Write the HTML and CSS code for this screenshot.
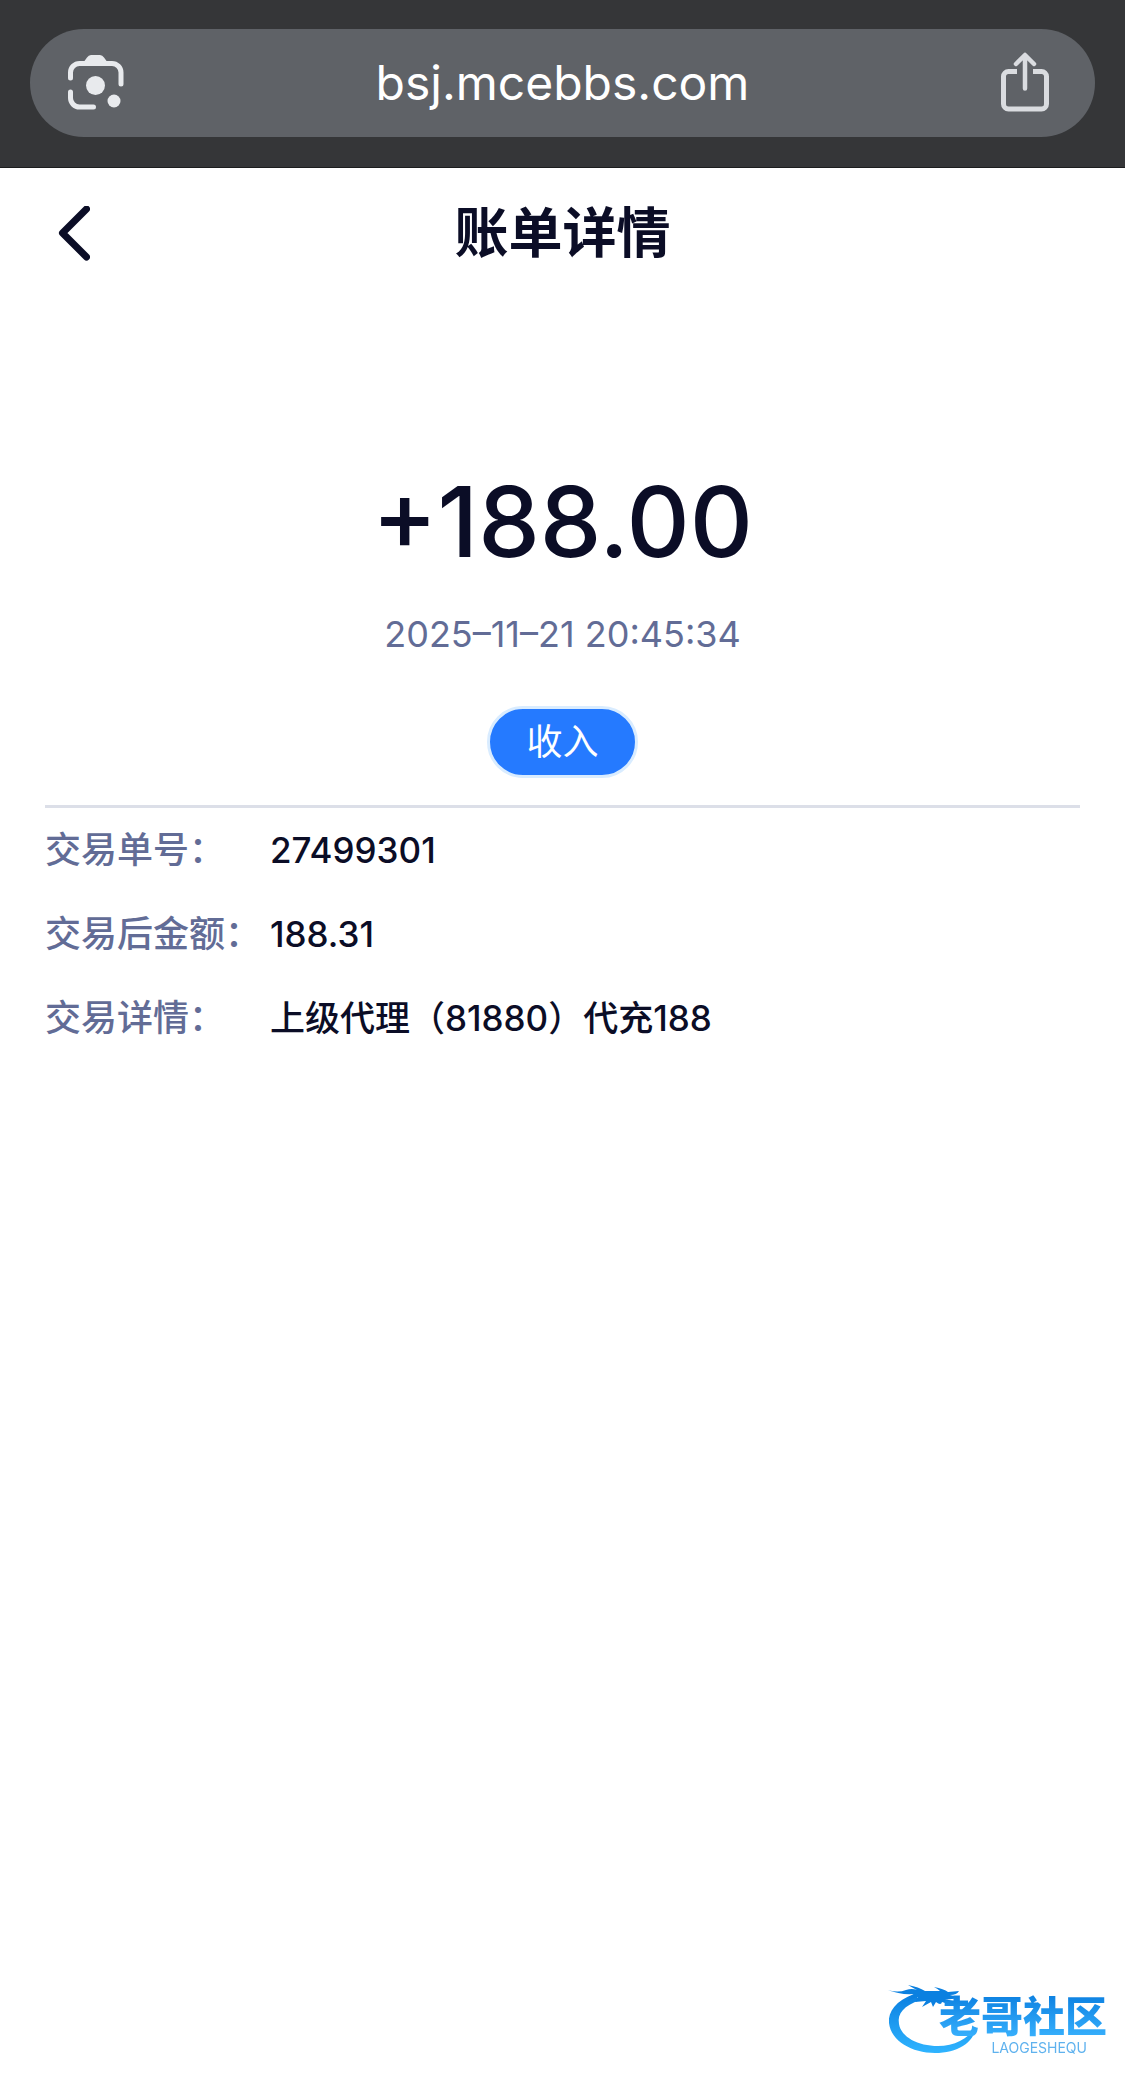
FILE: index.html
```
<!DOCTYPE html>
<html lang="zh-CN">
<head>
  <meta charset="UTF-8" />
  <meta name="viewport" content="width=device-width, initial-scale=1.0"/>
  <title>账单详情</title>
  <link rel="stylesheet" href="styles.css">
</head>
<body>
  <!-- BROWSER BAR -->
  <div class="browser-bar">
    <div class="address-pill">
      <button class="icon-btn" type="button" aria-label="Lens">
        <svg class="lens-icon" viewBox="0 0 56 56" fill="none" stroke="#e8eaed" stroke-width="5" stroke-linecap="round">
          <path d="M2.500 24V18.500a9 9 0 0 1 9-9h32.500a9 9 0 0 1 9 9V30"/>
          <path d="M2.500 38v6a9 9 0 0 0 9 9H25.500"/>
          <path d="M15 9l4-5.500q1.500-2.500 4-2.500h9q2.500 0 4 2.500L40 9z" fill="#e8eaed" stroke="none"/>
          <circle cx="27.500" cy="31.500" r="9.500" fill="#e8eaed" stroke="none"/>
          <circle cx="46" cy="47" r="6.500" fill="#e8eaed" stroke="none"/>
        </svg>
      </button>
      <input class="address" type="text" value="bsj.mcebbs.com" aria-label="Address" readonly />
      <button class="icon-btn" type="button" aria-label="Share">
        <svg class="share-icon" viewBox="0 0 48 60" fill="none" stroke="#dadce0" stroke-width="5">
          <path d="M16 19.500H7.500a5 5 0 0 0-5 5v27.500a5 5 0 0 0 5 5h33a5 5 0 0 0 5-5V24.500a5 5 0 0 0-5-5H32"/>
          <path d="M24 36.500V3.500M15 12l9-9 9 9" stroke-width="4.500" stroke-linecap="round" stroke-linejoin="round"/>
        </svg>
      </button>
    </div>
  </div>

  <!-- PAGE HEADER -->
  <header class="page-header">
    <button class="back-btn" type="button" aria-label="返回">
      <svg class="back-icon" viewBox="0 0 32 56" fill="none" stroke="#0b0d26" stroke-width="7" stroke-linecap="round" stroke-linejoin="round">
        <path d="M28.500 3L4.500 27l24 24"/>
      </svg>
    </button>
    <h1>账单详情</h1>
  </header>

  <main>
    <!-- Amount summary -->
    <section class="summary">
      <p class="amount">+188.00</p>
      <p class="time">2025–11–21 20:45:34</p>
      <span class="tag">收入</span>
    </section>

    <!-- Bill details -->
    <dl class="details">
      <div class="row">
        <dt>交易单号：</dt>
        <dd>27499301</dd>
      </div>
      <div class="row">
        <dt>交易后金额：</dt>
        <dd>188.31</dd>
      </div>
      <div class="row">
        <dt>交易详情：</dt>
        <dd>上级代理（81880）代充188</dd>
      </div>
    </dl>
  </main>

  <!-- WATERMARK -->
  <div class="watermark">
    <svg class="dragon" viewBox="0 0 90 70">
      <defs>
        <linearGradient id="dragonFill" x1="0" y1="0" x2="0" y2="1">
          <stop offset="0" stop-color="#0b7fe0"/>
          <stop offset="1" stop-color="#2fb4ff"/>
        </linearGradient>
      </defs>
      <!-- body ring -->
      <path fill="url(#dragonFill)" d="M26 9C8 16 0 26 1 38C3 56 24 68 47 68C69 68 86 58 88 42C80 54 66 61 50 61C30 61 13 52 11 39C9 28 16 21 32 15Z"/>
      <!-- head, horns and whiskers -->
      <path fill="#0b80e0" d="M0 5Q10 8 18 5Q24 3 29 5Q25 3 20 0Q31 2 37 6L52 6Q50 4 46 2Q56 4 60 7L71 6Q69 10 62 10L70 12Q66 15 57 14L69 17Q62 20 54 17Q53 21 48 17L45 22L43 17L34 22L38 16L27 17L30 12Q24 13 20 16Q21 12 26 9Q12 10 0 5Z"/>
    </svg>
    <div class="watermark-text">
      <strong>老哥社区</strong>
      <small>LAOGESHEQU</small>
    </div>
  </div>
</body>
</html>
```
FILE: styles.css
```
/* ------------------------------------------------------------
   COLOR PALETTE
------------------------------------------------------------ */
:root {
  --bar: #353638;
  --pill: #5f6267;
  --ink: #0b0d26;   /* titles and values */
  --muted: #626c96; /* labels and time */
  --blue: #257aff;
  --line: #dcdfe8;
}

/* ------------------------------------------------------------
   GLOBAL & RESET
------------------------------------------------------------ */
* {
  margin: 0;
  padding: 0;
  box-sizing: border-box;
}
body {
  font-family: Inter, "Noto Sans CJK SC", sans-serif;
  font-size: 36px;
  line-height: 48px;
  background-color: #fff;
  color: var(--ink);
}
button {
  background: none;
  border: none;
  cursor: pointer;
}
svg {
  display: block;
}

/* ------------------------------------------------------------
   BROWSER BAR
------------------------------------------------------------ */
.browser-bar {
  background-color: var(--bar);
  border-bottom: 1px solid #1c1d1e;
  padding: 29px 30px 30px;
}
.address-pill {
  display: flex;
  align-items: center;
  background-color: var(--pill);
  border-radius: 54px;
  height: 108px;
  padding: 0 38px 2px;
}
.icon-btn {
  flex: none;
}
.lens-icon {
  width: 56px;
  height: 56px;
}
.share-icon {
  width: 48px;
  height: 60px;
  margin-right: 8px;
}
.address {
  flex: 1;
  min-width: 0;
  background: none;
  border: none;
  outline: none;
  color: #fff;
  font-family: inherit;
  font-size: 48px;
  text-align: center;
}

/* ------------------------------------------------------------
   PAGE HEADER
------------------------------------------------------------ */
.page-header {
  display: grid;
  grid-template-columns: 1fr auto 1fr;
  align-items: center;
  height: 132px;
  padding: 0 58px;
}
.back-btn {
  justify-self: start;
}
.back-icon {
  width: 32px;
  height: 56px;
}
.page-header h1 {
  font-size: 54px;
  line-height: 72px;
  font-weight: 600;
}

/* ------------------------------------------------------------
   SUMMARY
------------------------------------------------------------ */
.summary {
  display: flex;
  flex-direction: column;
  align-items: center;
  margin: 0 45px;
  padding: 162px 0 27px;
  border-bottom: 3px solid var(--line);
}
.amount {
  font-size: 98px;
  line-height: 120px;
  font-weight: 500;
}
.time {
  color: var(--muted);
  margin: 28px 0 48px;
}
.tag {
  background-color: var(--blue);
  border: 3px solid #d9ecff;
  border-radius: 36px;
  color: #fff;
  line-height: 66px;
  padding: 0 36px;
}

/* ------------------------------------------------------------
   DETAILS
------------------------------------------------------------ */
.details {
  display: flex;
  flex-direction: column;
  gap: 36px;
  padding: 18px 45px;
  font-weight: 500;
}
.row {
  display: flex;
}
.row dt {
  flex: none;
  width: 225px;
  color: var(--muted);
}
.row dd {
  font-size: 35px;
}

/* ------------------------------------------------------------
   WATERMARK
------------------------------------------------------------ */
.watermark {
  position: fixed;
  right: 18px;
  bottom: 24px;
  display: flex;
  align-items: flex-end;
}
.dragon {
  width: 90px;
  height: 70px;
  margin-right: -39px;
}
.watermark-text {
  display: flex;
  flex-direction: column;
  align-items: flex-end;
}
.watermark-text strong {
  background: linear-gradient(#0b7fe0, #3bb4ff);
  background-clip: text;
  color: transparent;
  font-size: 42px;
  line-height: 48px;
  font-weight: 900;
}
.watermark-text small {
  color: #5fb2ee;
  font-size: 14px;
  line-height: 14px;
  padding-right: 20px;
}
```
